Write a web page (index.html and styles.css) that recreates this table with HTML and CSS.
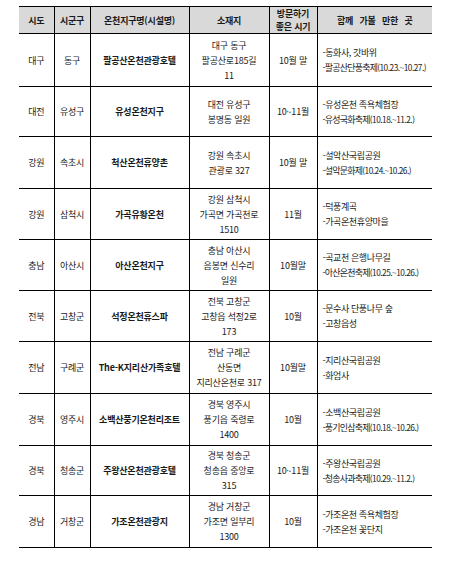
FILE: index.html
```html
<!DOCTYPE html>
<html lang="ko">
<head>
<meta charset="utf-8">
<link rel="stylesheet" href="styles.css">
</head>
<body>
<div class="page">
<table class="spa">
  <colgroup>
    <col class="c1"><col class="c2"><col class="c3"><col class="c4"><col class="c5"><col class="c6">
  </colgroup>
  <thead>
    <tr class="head">
      <th>시도</th><th>시군구</th><th>온천지구명(시설명)</th><th>소재지</th><th class="tight">방문하기<br>좋은 시기</th><th class="wide">함께 가볼 만한 곳</th>
    </tr>
  </thead>
  <tbody>
    <tr class="r54"><td>대구</td><td>동구</td><td class="name">팔공산온천관광호텔</td><td>대구 동구<br>팔공산로185길<br>11</td><td>10월 말</td><td class="near">-동화사, 갓바위<br><span class="fest">-팔공산단풍축제<span class="date">(10.23.~10.27.)</span></span></td></tr>
    <tr class="r51"><td>대전</td><td>유성구</td><td class="name">유성온천지구</td><td>대전 유성구<br>봉명동 일원</td><td>10~11월</td><td class="near">-유성온천 족욕체험장<br><span class="fest">-유성국화축제<span class="date">(10.18.~11.2.)</span></span></td></tr>
    <tr class="r53"><td>강원</td><td>속초시</td><td class="name">척산온천휴양촌</td><td>강원 속초시<br>관광로 327</td><td>10월 말</td><td class="near">-설악산국립공원<br><span class="fest">-설악문화제<span class="date">(10.24.~10.26.)</span></span></td></tr>
    <tr class="r52"><td>강원</td><td>삼척시</td><td class="name">가곡유황온천</td><td>강원 삼척시<br>가곡면 가곡천로<br>1510</td><td>11월</td><td class="near">-덕풍계곡<br>-가곡온천휴양마을</td></tr>
    <tr class="r52"><td>충남</td><td>아산시</td><td class="name">아산온천지구</td><td>충남 아산시<br>음봉면 신수리<br>일원</td><td>10월말</td><td class="near">-곡교천 은행나무길<br><span class="fest">-아산온천축제<span class="date">(10.25.~10.26.)</span></span></td></tr>
    <tr class="r52"><td>전북</td><td>고창군</td><td class="name">석정온천휴스파</td><td>전북 고창군<br>고창읍 석정2로<br>173</td><td>10월</td><td class="near">-문수사 단풍나무 숲<br>-고창읍성</td></tr>
    <tr class="r53"><td>전남</td><td>구례군</td><td class="name">The-K지리산가족호텔</td><td>전남 구례군<br>산동면<br>지리산온천로 317</td><td>10월말</td><td class="near">-지리산국립공원<br>-화엄사</td></tr>
    <tr class="r53"><td>경북</td><td>영주시</td><td class="name">소백산풍기온천리조트</td><td>경북 영주시<br>풍기읍 죽령로<br>1400</td><td>10월</td><td class="near">-소백산국립공원<br><span class="fest">-풍기인삼축제<span class="date">(10.18.~10.26.)</span></span></td></tr>
    <tr class="r51"><td>경북</td><td>청송군</td><td class="name">주왕산온천관광호텔</td><td>경북 청송군<br>청송읍 중앙로<br>315</td><td>10~11월</td><td class="near">-주왕산국립공원<br><span class="fest">-청송사과축제<span class="date">(10.29.~11.2.)</span></span></td></tr>
    <tr class="r53"><td>경남</td><td>거창군</td><td class="name">가조온천관광지</td><td>경남 거창군<br>가조면 일부리<br>1300</td><td>10월</td><td class="near">-가조온천 족욕체험장<br>-가조온천 꽃단지</td></tr>
  </tbody>
</table>
</div>
</body>
</html>
```

FILE: styles.css
```css
html, body {
  margin: 0;
  padding: 0;
  background: #ffffff;
}
.page {
  padding: 6px 0 0 19px;
}
.spa {
  width: 413px;
  border-collapse: collapse;
  table-layout: fixed;
  font-family: "Noto Sans CJK KR", "Liberation Sans", sans-serif;
  font-size: 9px;
  color: #1a1a1a;
  letter-spacing: -0.2px;
}
.c1 { width: 35px; }
.c2 { width: 36px; }
.c3 { width: 99px; }
.c4 { width: 80px; }
.c5 { width: 48px; }
.c6 { width: 115px; }
.spa th, .spa td {
  padding: 0;
  text-align: center;
  vertical-align: middle;
  border-bottom: 1px solid #000;
  border-left: 1px solid #000;
  line-height: 15px;
  overflow: hidden;
  white-space: nowrap;
}
.spa th:first-child, .spa td:first-child {
  border-left: none;
}
.spa thead th {
  border-top: 1px solid #000;
  background: #d9d9d9;
  font-weight: 700;
  height: 26px;
}
.spa th.tight { line-height: 13px; }
.spa th.wide { word-spacing: 4px; }
.spa td.name { font-weight: 600; }
.spa td.near {
  text-align: left;
  padding-left: 5px;
  letter-spacing: -0.4px;
}
.fest { letter-spacing: -0.8px; }
.date {
  font-size: 8.3px;
  letter-spacing: -0.5px;
}
.r51 { height: 50px; }
.r52 { height: 51px; }
.r53 { height: 52px; }
.r54 { height: 53px; }
```
